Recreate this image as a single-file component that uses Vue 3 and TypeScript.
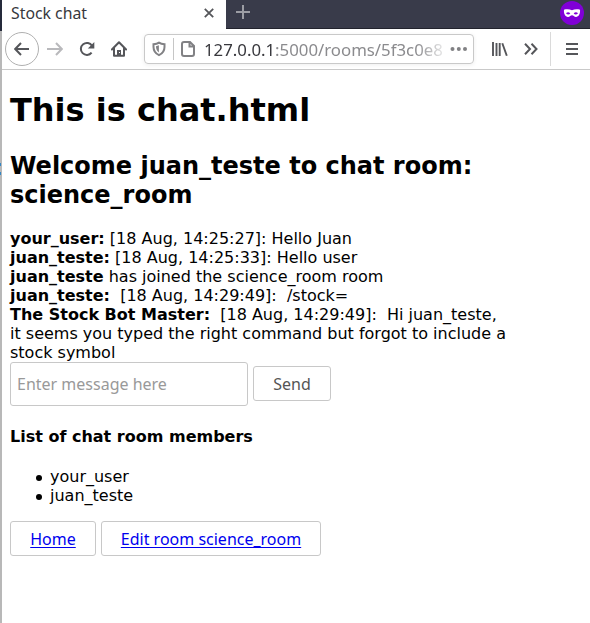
<script setup lang="ts">
import { ref } from 'vue'

interface Message {
  author: string
  text: string
}

const nb = '\u00a0'
const messages: Message[] = [
  { author: 'your_user:', text: ' [18 Aug, 14:25:27]: Hello Juan' },
  { author: 'juan_teste:', text: ' [18 Aug, 14:25:33]: Hello user' },
  { author: 'juan_teste', text: ' has joined the science_room room' },
  { author: 'juan_teste:', text: `${nb} [18 Aug, 14:29:49]:${nb} /stock=` },
  {
    author: 'The Stock Bot Master:',
    text: `${nb} [18 Aug, 14:29:49]:${nb} Hi juan_teste, it seems you typed the right command but forgot to include a stock symbol`,
  },
]
const members: string[] = ['your_user', 'juan_teste']
const draft = ref('')
</script>

<template>
  <div class="window">
    <div class="edge"><i class="edge-top"></i><i class="edge-mid"></i><i class="edge-mark"></i></div>
    <div class="browser">
      <div class="tabs">
        <div class="tab">
          <span class="tab-title">Stock chat</span>
          <svg class="close" width="10" height="10" viewBox="0 0 10 10"><path d="M.8.8l8.4 8.4M9.2.8L.8 9.2" /></svg>
        </div>
        <svg class="plus" width="14" height="14" viewBox="0 0 14 14"><path d="M7 0v14M0 7h14" /></svg>
        <svg class="mask" width="24" height="24" viewBox="0 0 24 24">
          <circle cx="12" cy="12" r="12" fill="#8000d7" />
          <path fill="#fff" fill-rule="evenodd" d="M4 8.800C6.500 8.100 9.600 8.200 12 9.300C14.400 8.200 17.500 8.100 20 8.800C20.500 12.500 18.600 16 16 16C14.200 16 13.400 14.300 12 14.300C10.600 14.300 9.800 16 8 16C5.400 16 3.500 12.500 4 8.800ZM6 12.200C7.300 13.900 9.300 13.700 10.300 12.400C9.200 10.800 7.200 10.800 6 12.200ZM18 12.200C16.700 13.900 14.700 13.700 13.700 12.400C14.800 10.800 16.800 10.800 18 12.200Z" />
        </svg>
      </div>
      <div class="toolbar">
        <div class="back">
          <svg width="16" height="16" viewBox="0 0 16 16"><path d="M15 8H1.500M7 2L1.200 8L7 14" /></svg>
        </div>
        <svg class="icon forward" width="16" height="16" viewBox="0 0 16 16"><path d="M0 8h14.500M9 2l5.800 6L9 14" /></svg>
        <svg class="icon reload" width="16" height="16" viewBox="0 0 16 16"><path d="M12.600 11.600A6 6 0 1 1 13 4.800" /><path d="M15.300 1v6.500H8.800z" class="solid" /></svg>
        <svg class="icon home" width="16" height="16" viewBox="0 0 16 16"><path d="M.9 8.500L8 1.300l7.100 7.200M3 7v7.800h10V7" stroke-linecap="round" stroke-linejoin="round" /><path class="solid" fill-rule="evenodd" d="M6 9h4v6H6zM8 11v1h1v-1z" /></svg>
        <div class="address">
          <svg class="shield" width="14" height="16" viewBox="0 0 14 16"><path d="M1.500 3.200Q5 2.900 7 1.600Q9 2.900 12.500 3.200V6C12.500 10 10.500 12.500 7 14.200C3.500 12.500 1.500 10 1.500 6Z" /><path class="solid" d="M4 5.300L6.900 4.300V11.500C5 10.200 4 8.300 4 5.300Z" /></svg>
          <i class="divider"></i>
          <svg class="page-icon" width="14" height="16" viewBox="0 0 14 16"><path d="M3 1h6l4 4v8a2 2 0 0 1-2 2H3a2 2 0 0 1-2-2V3a2 2 0 0 1 2-2zM8.500 1v4.500H13" /></svg>
          <span class="url"><b>127.0.0.1</b>:5000/rooms/5f3c0e8</span>
          <svg class="dots" width="18" height="4" viewBox="0 0 18 4"><circle cx="2.500" cy="2" r="2" /><circle cx="8.800" cy="2" r="2" /><circle cx="15" cy="2" r="2" /></svg>
        </div>
        <svg class="library" width="16" height="14" viewBox="0 0 16 14"><path d="M1 0v14M4.500 1v13M7.700 1v13M10.300 1.200l4.500 12.500" /></svg>
        <svg class="more" width="14" height="12" viewBox="0 0 14 12"><path d="M1 .8L6 6l-5 5.200M7.500.8L12.500 6l-5 5.200" /></svg>
        <i class="separator"></i>
        <svg class="menu" width="12" height="12" viewBox="0 0 12 12"><path d="M0 1h12M0 6h12M0 11h12" /></svg>
      </div>
      <main>
        <h1>This is chat.html</h1>
        <h2>Welcome juan_teste to chat room: science_room</h2>
        <div class="messages">
          <div v-for="(m, i) in messages" :key="i"><strong>{{ m.author }}</strong>{{ m.text }}</div>
        </div>
        <form class="compose" @submit.prevent>
          <input v-model="draft" type="text" placeholder="Enter message here" />
          <button type="submit">Send</button>
        </form>
        <h4>List of chat room members</h4>
        <ul>
          <li v-for="name in members" :key="name">{{ name }}</li>
        </ul>
        <nav>
          <a class="home-link" href="#">Home</a>
          <a class="edit-link" href="#">Edit room science_room</a>
        </nav>
      </main>
    </div>
  </div>
</template>

<style>
body { margin: 0; overflow: hidden; background: #fff; }
</style>

<style scoped>
* { box-sizing: border-box; }
svg { display: block; flex: none; fill: none; stroke: #55565a; stroke-width: 2; }
svg .solid { fill: #55565a; stroke: none; }
.window { display: flex; width: 590px; height: 623px; overflow: hidden; background: #fff; }
.edge { width: 2px; flex: none; background: #b8b8b8; display: flex; flex-direction: column; }
.edge-top { height: 31px; background: #252a3b; }
.edge-mid { height: 132px; }
.edge-mark { height: 12px; width: 1px; border: solid #3486c4; border-width: 3px 0; }
.browser { width: 588px; flex: none; }
.tabs { display: flex; height: 29px; background: #393b4a; border-bottom: 1px solid #22232d; font-family: "Noto Sans", sans-serif; }
.tab { width: 224px; height: 29px; display: flex; background: #fff; padding-left: 9px; }
.tab-title { width: 193px; font-size: 15.800px; line-height: 20px; padding-top: 3px; color: #37383d; white-space: nowrap; }
.close { margin-top: 8px; stroke-width: 1.800; }
.plus { margin: 5px 0 0 10px; stroke: #9c9da4; stroke-width: 2; }
.mask { margin: 1px 6px 0 auto; stroke: none; }
.toolbar { display: flex; align-items: center; height: 41px; border-bottom: 1px solid #c9c9c9; background: #fff; }
.back { display: flex; align-items: center; justify-content: center; width: 34px; height: 34px; margin-left: 3px; border: 1px solid #b0b0b0; border-radius: 50%; flex: none; }
.forward { margin-left: 8px; stroke: #b9b9bc; }
.reload { margin-left: 16px; }
.home { margin-left: 16px; }
.address { display: flex; align-items: center; width: 330px; height: 30px; margin-left: 17px; border: 1px solid #c9c9c9; border-radius: 4px; box-shadow: 0 1px 4px #00000012; flex: none; }
.address svg { stroke: #818184; }
.address svg .solid { fill: #818184; stroke: none; }
.shield { margin-left: 7px; }
.divider { width: 1px; height: 22px; background: #c6c6c6; margin: 0 7px; }
.url { width: 240px; margin-left: 9px; padding-top: 1px; overflow: hidden; white-space: nowrap; font: 16.800px/24px "Noto Sans", sans-serif; color: #8b8b8e; mask-image: linear-gradient(90deg, #000 212px, transparent 246px); }
.url b { font-weight: 400; color: #38383d; }
.address .dots { margin-left: 6px; fill: #818184; stroke: none; }
.library { margin-left: 18px; stroke-width: 1.900; }
.more { margin-left: 16px; }
.separator { width: 1px; height: 34px; background: #dadada; margin-left: 12px; }
.menu { margin-left: 15px; }
main { width: 516px; padding: 21px 8px 0; font: 16px/19px "DejaVu Sans", sans-serif; color: #000; }
h1 { margin: 0; font-size: 32px; line-height: 38px; }
h2 { margin: 23px 0 19px; font-size: 24px; line-height: 29px; }
.compose { display: flex; align-items: flex-start; gap: 5px; }
input, button, nav a { font-family: "Noto Sans", sans-serif; font-size: 16px; background: #fff; border: 1px solid #c8c8c8; border-radius: 3px; }
input { width: 238px; height: 44px; padding: 0 6px; outline: 0; }
input::placeholder { color: #999; opacity: 1; }
button { width: 78px; height: 35px; margin-top: 4px; padding: 0; color: #555; }
h4 { margin: 21px 0; font-size: 16px; line-height: 19px; }
ul { margin: 0; padding-left: 26px; list-style: none; }
li { display: flex; align-items: center; gap: 8px; }
li::before { content: ""; width: 6px; height: 6px; margin-top: 2px; border-radius: 50%; background: #000; }
nav { display: flex; gap: 5px; margin-top: 16px; }
nav a { height: 35px; line-height: 34px; color: #00e; text-align: center; text-decoration: underline; text-underline-offset: 2px; white-space: nowrap; }
.home-link { width: 86px; }
.edit-link { width: 220px; }
</style>
